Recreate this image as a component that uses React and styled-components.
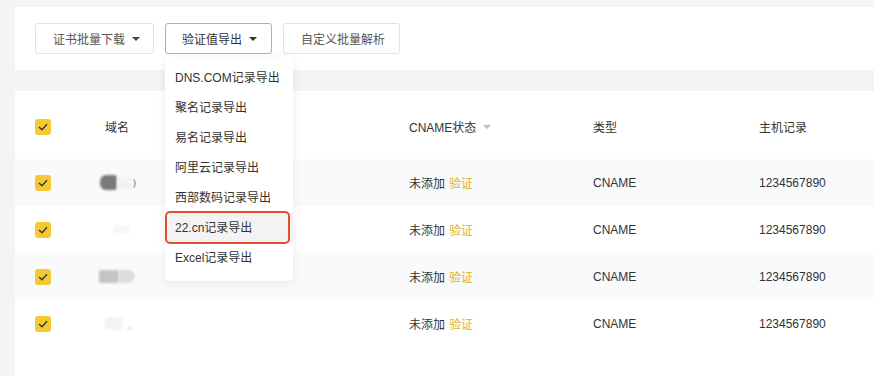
import React from "react";
import styled, { createGlobalStyle } from "styled-components";

const Global = createGlobalStyle`
  html, body {
    margin: 0;
    padding: 0;
    background: #f4f4f4;
    overflow: hidden;
    font-family: "Liberation Sans", "Noto Sans CJK SC", sans-serif;
    font-size: 12px;
    color: #333;
  }
`;

const Page = styled.div`
  padding: 7px 0 0 15px;
  height: 369px;
  display: flex;
  flex-direction: column;
  gap: 21px;
`;

const Toolbar = styled.div`
  position: relative;
  background: #fff;
  padding: 16px 20px;
  display: flex;
  gap: 11px;
`;

const Button = styled.div`
  position: relative;
  box-sizing: border-box;
  height: 31px;
  width: ${(p) => p.w}px;
  padding-left: ${(p) => p.pl}px;
  display: flex;
  align-items: center;
  gap: 7px;
  border: 1px solid ${(p) => (p.active ? "#e2b22c" : "#e3e3e3")};
  border-radius: 3px;
  background: #fff;
  color: ${(p) => (p.active ? "#333" : "#555")};
`;

const Caret = styled.span`
  width: 0;
  height: 0;
  border-left: 4px solid transparent;
  border-right: 4px solid transparent;
  border-top: 4px solid ${(p) => p.color || "#444"};
  margin-top: 1px;
`;

const Menu = styled.div`
  position: absolute;
  top: 33px;
  left: -1px;
  width: 128px;
  padding: 6px 0 8px;
  background: #fff;
  border-radius: 4px;
  box-shadow: 0 2px 10px rgba(0, 0, 0, 0.08);
  z-index: 5;
`;

const MenuItem = styled.div`
  position: relative;
  height: 30px;
  line-height: 30px;
  padding-left: 10px;
  color: #333;
  white-space: nowrap;
  background: ${(p) => (p.marked ? "#f3f3f3" : "transparent")};

  ${(p) =>
    p.marked &&
    `
    &::after {
      content: "";
      position: absolute;
      inset: -2px 3px -1px 0;
      border: 2px solid #e4502f;
      border-radius: 5px;
    }
  `}
`;

const Card = styled.div`
  flex: 1;
  background: #fff;
`;

const Row = styled.div`
  box-sizing: border-box;
  display: grid;
  grid-template-columns: 52px 60px 262px 184px 166px 1fr;
  align-items: center;
  padding-left: 20px;
  padding-top: ${(p) => (p.head ? 3 : 0)}px;
  height: ${(p) => (p.head ? 68 : 47)}px;
  background: ${(p) => (p.shade ? "#f9fafb" : "#fff")};
`;

const Check = styled.span`
  width: 16px;
  height: 16px;
  border-radius: 3px;
  background: #f4c934;
  display: flex;
  align-items: center;
  justify-content: center;
`;

const Cell = styled.div`
  display: flex;
  align-items: center;
  gap: 4px;
  justify-content: ${(p) => (p.center ? "center" : "flex-start")};
`;

const Link = styled.span`
  color: #e2b02a;
`;

const Blur = styled.span`
  display: inline-block;
  height: ${(p) => p.h}px;
  width: ${(p) => p.w}px;
  background: ${(p) => p.bg};
  border-radius: ${(p) => p.r || "4px"};
  filter: blur(1px);
`;

const Domain = styled.div`
  display: flex;
  align-items: center;
  margin-left: ${(p) => p.ml}px;
  gap: 0;
`;

const Tick = () => (
  <svg width="10" height="8" viewBox="0 0 10 8">
    <path d="M1 4 L4 6.8 L9 1.2" fill="none" stroke="#333" strokeWidth="1.3" />
  </svg>
);

const menuItems = [
  "DNS.COM记录导出",
  "聚名记录导出",
  "易名记录导出",
  "阿里云记录导出",
  "西部数码记录导出",
  "22.cn记录导出",
  "Excel记录导出",
];

const domains = [
  <Domain ml={2}>
    <Blur w={17} h={15} bg="#7a7a7a" r="6px 3px 3px 6px" />
    <Blur w={16} h={12} bg="#f2f2f2" r="2px" />
    <span style={{ color: "#555", fontSize: 9 }}>)</span>
  </Domain>,
  <Domain ml={10}>
    <Blur w={16} h={8} bg="#f6f6f6" r="2px" />
  </Domain>,
  <Domain ml={0}>
    <Blur w={20} h={13} bg="#c4c4c4" r="2px" />
    <Blur w={16} h={13} bg="#dcdcdc" r="2px 7px 7px 2px" />
  </Domain>,
  <Domain ml={2}>
    <Blur w={17} h={13} bg="#f3f3f3" r="3px" />
    <Blur w={3} h={1} bg="#aaa" r="0" style={{ marginLeft: 6, marginTop: 9 }} />
  </Domain>,
];

export default function App() {
  return (
    <>
      <Global />
      <Page>
        <Toolbar>
          <Button w={119} pl={17}>
            证书批量下载 <Caret />
          </Button>
          <Button w={107} pl={16} active>
            验证值导出 <Caret color="#333" />
            <Menu>
              {menuItems.map((m) => (
                <MenuItem key={m} marked={m.startsWith("22")}>
                  {m}
                </MenuItem>
              ))}
            </Menu>
          </Button>
          <Button w={117} pl={17}>
            自定义批量解析
          </Button>
        </Toolbar>
        <Card>
          <Row head>
            <Check>
              <Tick />
            </Check>
            <Cell center>域名</Cell>
            <Cell />
            <Cell>
              CNAME状态 <Caret color="#bbb" style={{ marginLeft: 3 }} />
            </Cell>
            <Cell>类型</Cell>
            <Cell>主机记录</Cell>
          </Row>
          {domains.map((d, i) => (
            <Row key={i} shade={i % 2 === 0}>
              <Check>
                <Tick />
              </Check>
              <Cell center>{d}</Cell>
              <Cell />
              <Cell>
                未添加 <Link>验证</Link>
              </Cell>
              <Cell>CNAME</Cell>
              <Cell>1234567890</Cell>
            </Row>
          ))}
        </Card>
      </Page>
    </>
  );
}
